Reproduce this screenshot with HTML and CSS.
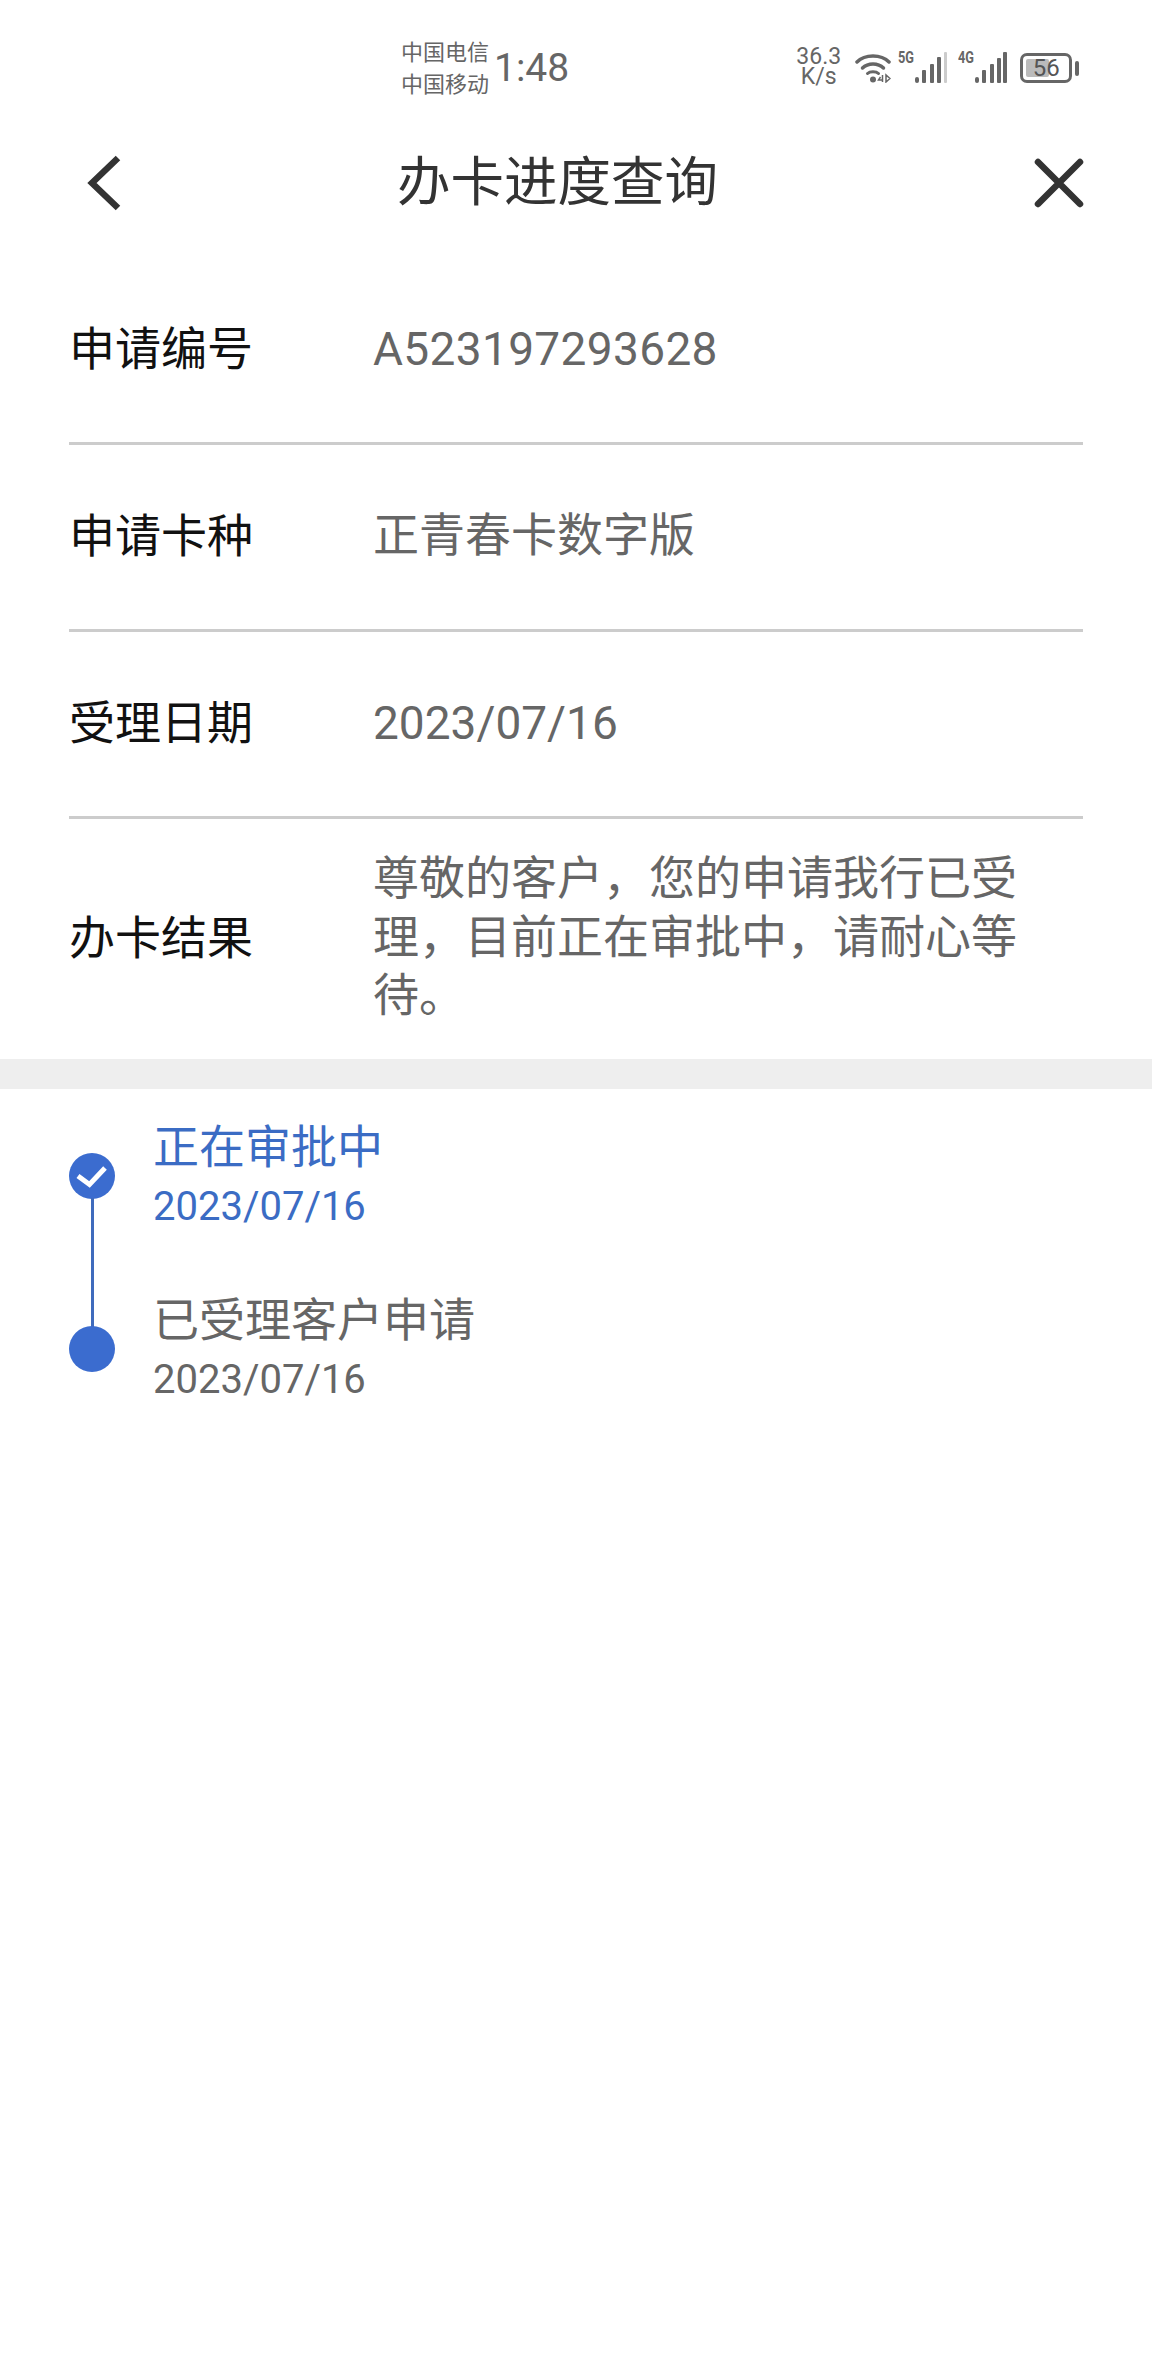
FILE: index.html
```html
<!DOCTYPE html>
<html lang="zh-CN">
<head>
<meta charset="utf-8">
<title>办卡进度查询</title>
<link rel="stylesheet" href="styles.css">
</head>
<body>
<div class="statusbar">
  <div class="carriers"><span>中国电信</span><span>中国移动</span></div>
  <div class="clock">1:48</div>
  <div class="speed"><span>36.3</span><span>K/s</span></div>
  <svg class="wifi" width="36" height="30" viewBox="0 0 36 30">
    <path d="M2 9 C10 1 26 1 34 9" fill="none" stroke="#666" stroke-width="3.500" stroke-linecap="round"/>
    <path d="M7.500 15 C13 9.500 23 9.500 28.500 15" fill="none" stroke="#666" stroke-width="3.500" stroke-linecap="round"/>
    <path d="M12.500 20.500 C15 18 21 18 23.500 20.500" fill="none" stroke="#666" stroke-width="3" stroke-linecap="round"/>
    <circle cx="18" cy="26.500" r="3" fill="#666"/>
    <path d="M27.500 22 v7 M25.500 24 l-2 3 h4 M31 22 v7 l4 -3.500 z" fill="none" stroke="#666" stroke-width="1.500"/>
  </svg>
  <div class="net">5G</div>
  <svg class="bars" width="32" height="32" viewBox="0 0 32 32">
    <rect x="0" y="25" width="4" height="6" rx="2" fill="#666"/>
    <rect x="7" y="18" width="4" height="13" rx="1" fill="#666"/>
    <rect x="15" y="12" width="4" height="19" rx="1" fill="#666"/>
    <rect x="22" y="5" width="4" height="26" rx="1" fill="#666"/>
    <rect x="29" y="0" width="3" height="31" rx="1" fill="#ccc"/>
  </svg>
  <div class="net net-second">4G</div>
  <svg class="bars" width="32" height="32" viewBox="0 0 32 32">
    <rect x="0" y="25" width="4" height="6" rx="2" fill="#666"/>
    <rect x="7" y="18" width="4" height="13" rx="1" fill="#666"/>
    <rect x="15" y="12" width="4" height="19" rx="1" fill="#666"/>
    <rect x="22" y="6" width="4" height="25" rx="1" fill="#666"/>
    <rect x="28" y="0" width="4" height="31" rx="1" fill="#666"/>
  </svg>
  <div class="battery"><span class="battery-fill"></span><span class="battery-text">56</span></div>
  <div class="battery-tip"></div>
</div>

<header class="nav">
  <svg class="back" width="36" height="56" viewBox="0 0 36 56">
    <path d="M32 3 L6 28 L32 53" fill="none" stroke="#333" stroke-width="6.500"/>
  </svg>
  <h1 class="title">办卡进度查询</h1>
  <svg class="close" width="50" height="50" viewBox="0 0 50 50">
    <path d="M4 4 L46 46 M46 4 L4 46" fill="none" stroke="#333" stroke-width="6.500" stroke-linecap="round"/>
  </svg>
</header>

<section class="details">
  <div class="row"><div class="label">申请编号</div><div class="value value-code">A523197293628</div></div>
  <div class="row"><div class="label">申请卡种</div><div class="value value-cn">正青春卡数字版</div></div>
  <div class="row"><div class="label">受理日期</div><div class="value value-date">2023/07/16</div></div>
  <div class="row row-last"><div class="label">办卡结果</div><div class="value value-long">尊敬的客户&#xFF0C;您的申请我行已受理&#xFF0C;目前正在审批中&#xFF0C;请耐心等待。</div></div>
</section>

<div class="band"></div>

<section class="timeline">
  <div class="step step-active">
    <div class="dot">
      <svg width="46" height="46" viewBox="0 0 46 46"><path d="M9 23 L20.500 31.500 L36 15" fill="none" stroke="#fff" stroke-width="5"/></svg>
    </div>
    <div class="step-text">
      <div class="step-title">正在审批中</div>
      <div class="step-date">2023/07/16</div>
    </div>
  </div>
  <div class="step">
    <div class="dot"></div>
    <div class="step-text">
      <div class="step-title">已受理客户申请</div>
      <div class="step-date">2023/07/16</div>
    </div>
  </div>
</section>
</body>
</html>
```
FILE: styles.css
```css
* { box-sizing: border-box; }
html, body { margin: 0; padding: 0; background: #fff; }
body {
  width: 1152px;
  height: 2376px;
  overflow: hidden;
  font-family: Roboto, "Noto Sans CJK SC", sans-serif;
}

.statusbar {
  height: 134px;
  display: flex;
  align-items: center;
  padding-left: 401px;
  color: #666;
}
.carriers {
  display: flex;
  flex-direction: column;
  font-size: 22px;
  line-height: 32px;
  width: 93px;
  margin-top: 3px;
}
.clock { font-size: 39px; line-height: 48px; margin-top: 2px; margin-right: 228px; }
.speed {
  display: flex;
  flex-direction: column;
  align-items: center;
  font-size: 23px;
  line-height: 20px;
  width: 43px;
}
.wifi { margin-left: 15px; margin-top: 2px; }
.net {
  font-size: 17px;
  font-weight: 700;
  line-height: 14px;
  width: 17px;
  margin-left: 7px;
  margin-top: -20px;
  transform: scaleX(0.75);
  transform-origin: left center;
}
.net-second { margin-left: 11px; }
.bars { margin-top: 2px; }
.battery {
  position: relative;
  width: 52px;
  height: 30px;
  margin-left: 13px;
  margin-top: 2px;
  border: 3px solid #666;
  border-radius: 7px;
  display: flex;
  align-items: center;
  justify-content: center;
}
.battery-fill {
  position: absolute;
  left: 3px;
  top: 3px;
  bottom: 3px;
  width: 23px;
  background: #bbb;
  border-radius: 2px;
}
.battery-text {
  position: relative;
  font-size: 24px;
  line-height: 24px;
  color: #555;
}
.battery-tip {
  width: 4px;
  height: 15px;
  margin-left: 3px;
  margin-top: 2px;
  background: #666;
  border-radius: 2px;
}

.nav {
  height: 98px;
  display: flex;
  align-items: center;
  padding: 0 68px 0 86px;
}
.title {
  margin: 0 0 0 275px;
  font-size: 53.500px;
  font-weight: 400;
  color: #333;
  line-height: 64px;
  white-space: nowrap;
}
.close { margin-left: auto; }

.details { padding: 26px 69px 0; }
.row {
  height: 187px;
  display: flex;
  align-items: center;
  border-bottom: 3px solid #ccc;
  font-size: 46px;
}
.row-last { height: 240px; border-bottom: 0; }
.label {
  width: 304px;
  color: #111;
  flex: none;
  padding-bottom: 11px;
}
.value { color: #666; }
.value-code { letter-spacing: 0.35px; padding-bottom: 2px; }
.value-date { padding-bottom: 2px; }
.value-cn { padding-bottom: 12px; }
.value-long { width: 650px; line-height: 58.500px; padding-bottom: 4px; }

.band { height: 30px; background: #eee; }

.timeline {
  padding: 31px 0 0 69px;
  display: flex;
  flex-direction: column;
  gap: 55px;
}
.step {
  position: relative;
  display: flex;
  align-items: center;
  gap: 38px;
}
.step-active::after {
  content: "";
  position: absolute;
  left: 22px;
  top: 78px;
  width: 3px;
  height: 130px;
  background: #3f6bbd;
}
.dot {
  width: 46px;
  height: 46px;
  flex: none;
  border-radius: 50%;
  background: #3b6ccf;
  margin-top: -7px;
}
.dot svg { display: block; }
.step-title { font-size: 46px; line-height: 54px; color: #666; margin-bottom: 2px; }
.step-date { font-size: 40px; line-height: 62px; color: #666; }
.step-active .step-title,
.step-active .step-date { color: #3b6cc4; }
```
